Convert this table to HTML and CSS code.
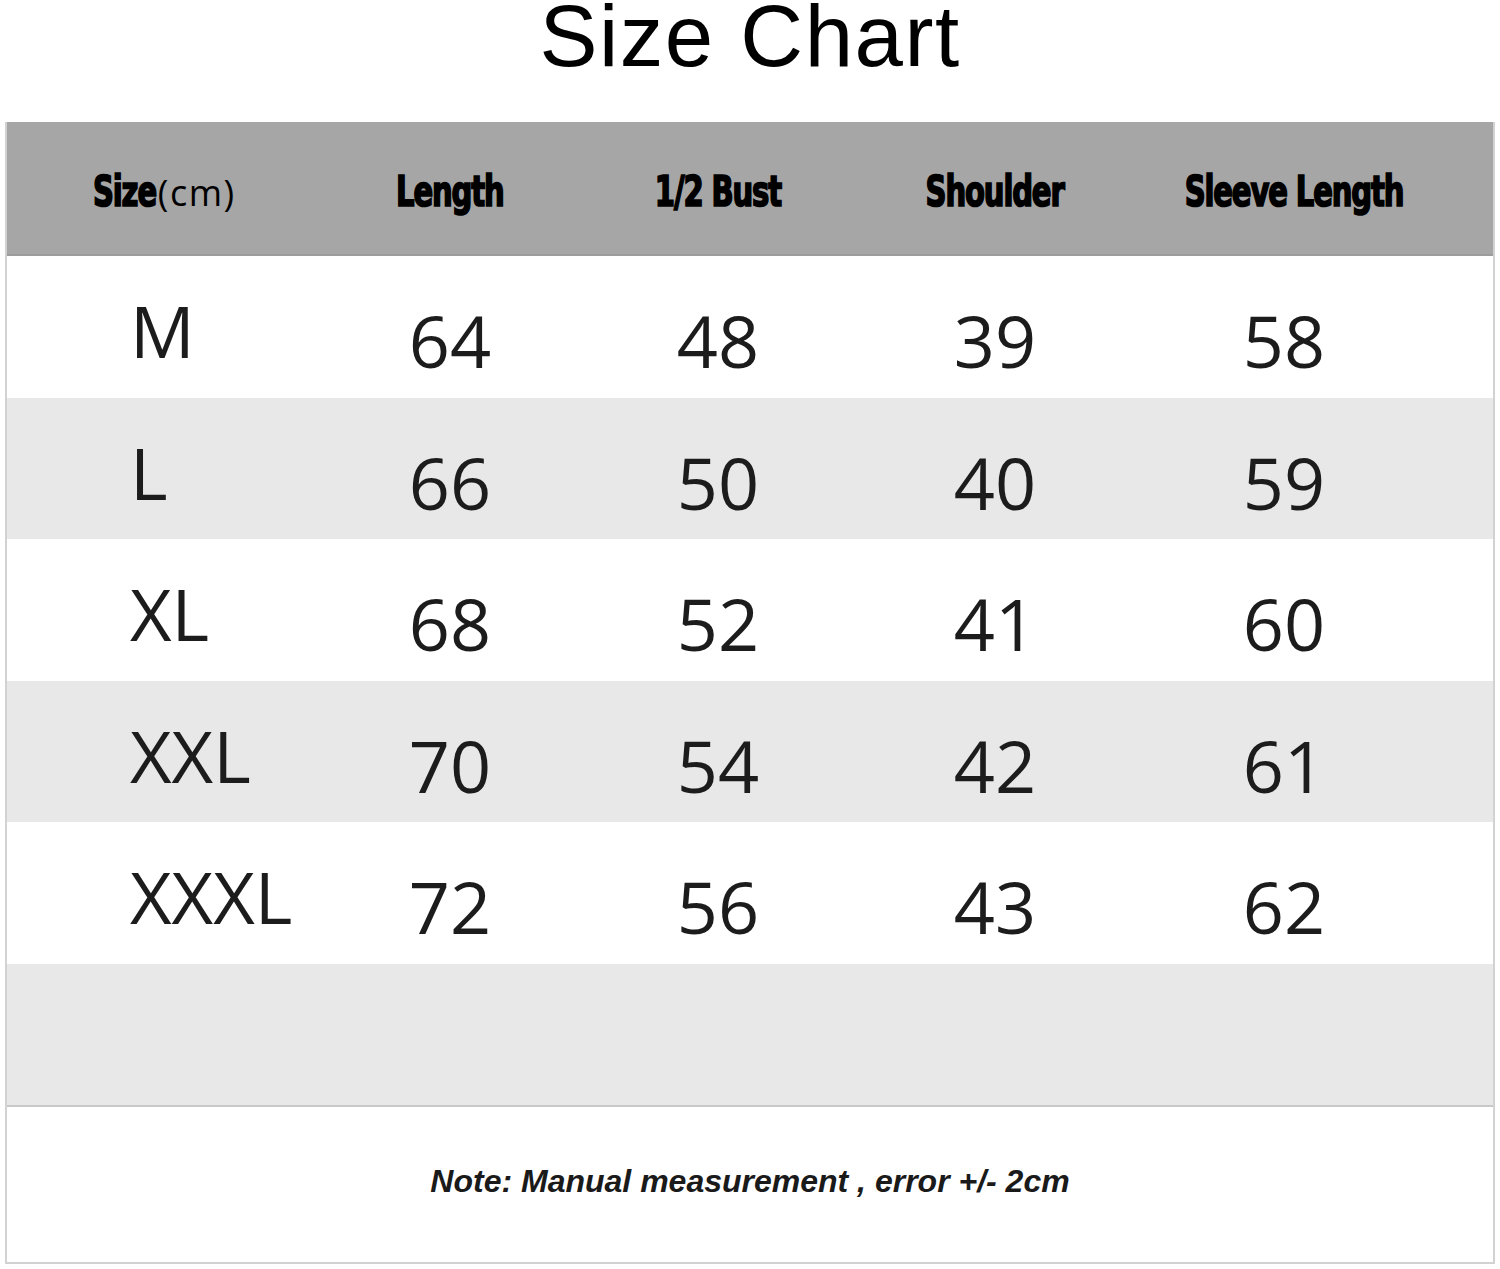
FILE: index.html
```html
<!DOCTYPE html>
<html lang="en">
<head>
<meta charset="utf-8">
<title>Size Chart</title>
<link rel="stylesheet" href="styles.css">
</head>
<body>
<h1 class="title">Size Chart</h1>
<div class="chart">
  <div class="row head">
    <div class="hcell first"><span class="hb hb-size">Size</span><span class="hr">(cm)</span></div>
    <div class="hcell"><span class="hb">Length</span></div>
    <div class="hcell"><span class="hb">1/2 Bust</span></div>
    <div class="hcell"><span class="hb">Shoulder</span></div>
    <div class="hcell last"><span class="hb">Sleeve Length</span></div>
  </div>
  <div class="row white">
    <div class="size">M</div><div class="num">64</div><div class="num">48</div><div class="num">39</div><div class="num">58</div>
  </div>
  <div class="row gray">
    <div class="size">L</div><div class="num">66</div><div class="num">50</div><div class="num">40</div><div class="num">59</div>
  </div>
  <div class="row white">
    <div class="size">XL</div><div class="num">68</div><div class="num">52</div><div class="num">41</div><div class="num">60</div>
  </div>
  <div class="row gray">
    <div class="size">XXL</div><div class="num">70</div><div class="num">54</div><div class="num">42</div><div class="num">61</div>
  </div>
  <div class="row white">
    <div class="size">XXXL</div><div class="num">72</div><div class="num">56</div><div class="num">43</div><div class="num">62</div>
  </div>
  <div class="row gray"></div>
  <div class="note">Note: Manual measurement , error +/- 2cm</div>
</div>
</body>
</html>
```
FILE: styles.css
```css
* { box-sizing: border-box; }
html, body { margin: 0; padding: 0; background: #ffffff; }
body { font-family: "Liberation Sans", Arial, sans-serif; color: #000; }

.title {
  margin: 0;
  padding-top: 2px;
  text-align: center;
  font-family: "Liberation Sans", Arial, sans-serif;
  font-weight: normal;
  font-size: 87px;
  line-height: 68px;
  letter-spacing: 1.5px;
  color: #000;
}

.chart {
  margin: 52px 5px 0 5px;
  border-left: 2px solid #d2d2d2;
  border-right: 2px solid #d2d2d2;
  border-bottom: 2px solid #d2d2d2;
}

.row {
  display: grid;
  grid-template-columns: 330px 226px 310px 244px 334px;
  height: 141.5px;
}
.row.white { background: #ffffff; }
.row.gray { background: #e8e8e8; }

.row.head {
  height: 134px;
  background: #a6a6a6;
  border-bottom: 2px solid #9c9c9c;
}

.hcell {
  text-align: center;
  padding-top: 49px;
  line-height: 42px;
  white-space: nowrap;
}
.hcell.first { text-align: left; padding-left: 86px; }
.hcell.last { padding-left: 20px; }
.hb {
  display: inline-block;
  font-family: "Liberation Sans Narrow", "DejaVu Sans Condensed", "Liberation Sans", sans-serif;
  font-weight: bold;
  font-size: 42px;
  letter-spacing: -1.5px;
  -webkit-text-stroke: 1.7px #000;
  color: #000;
  transform: scaleX(0.77);
  transform-origin: center;
}
.hb-size {
  transform-origin: left center;
  margin-right: -17px;
}
.hr {
  font-family: "Open Sans", "Noto Sans", sans-serif;
  font-weight: normal;
  font-size: 36px;
  letter-spacing: 1.5px;
  color: #000;
}

.size, .num {
  font-family: "Open Sans", "Noto Sans", sans-serif;
  font-weight: normal;
  font-size: 72px;
  line-height: 72px;
  color: #1c1c1c;
}
.size {
  text-align: left;
  padding-left: 123px;
  padding-top: 38px;
}
.num {
  text-align: center;
  padding-top: 48px;
}

.note {
  height: 157px;
  border-top: 2px solid #c8c8c8;
  text-align: center;
  padding-top: 59px;
  font-family: "Liberation Sans", Arial, sans-serif;
  font-style: italic;
  font-weight: bold;
  font-size: 32px;
  line-height: 31px;
  color: #1a1a1a;
}
```
